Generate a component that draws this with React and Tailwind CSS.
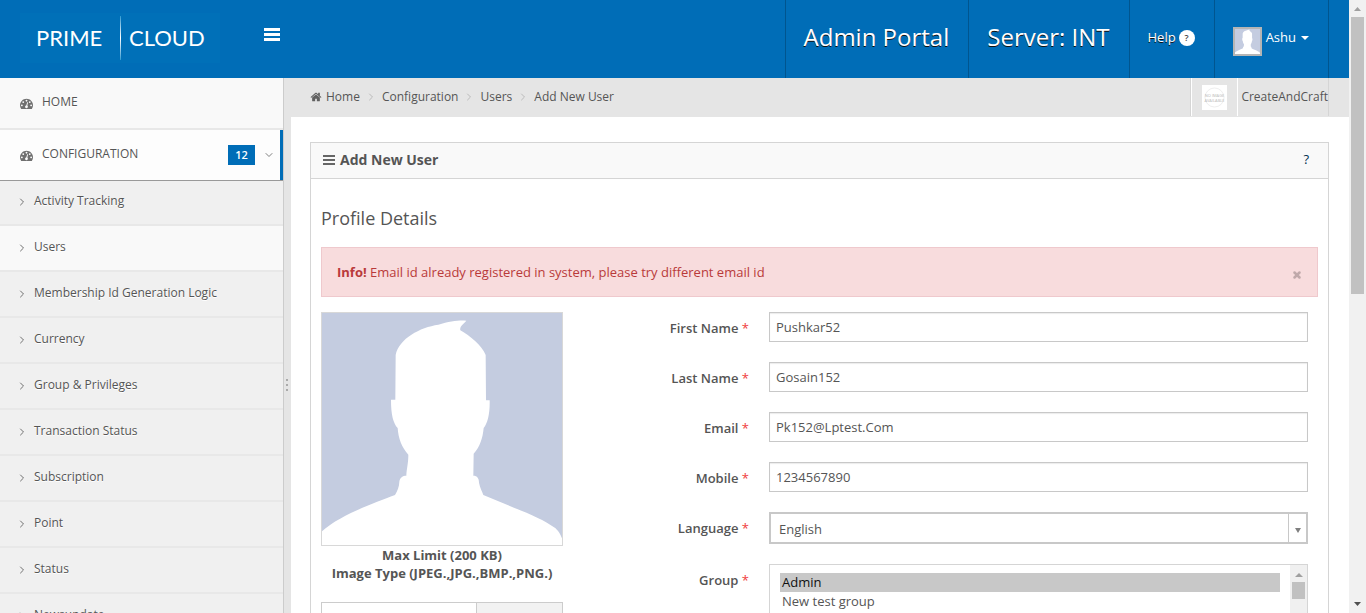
import { ChevronDown, ChevronRight, X } from "lucide-react";

const NAV = [
  "Activity Tracking",
  "Users",
  "Membership Id Generation Logic",
  "Currency",
  "Group & Privileges",
  "Transaction Status",
  "Subscription",
  "Point",
  "Status",
  "Newsupdate",
];

const FIELDS = [
  { id: "first-name", label: "First Name", value: "Pushkar52" },
  { id: "last-name", label: "Last Name", value: "Gosain152" },
  { id: "email", label: "Email", value: "Pk152@Lptest.Com" },
  { id: "mobile", label: "Mobile", value: "1234567890" },
];

function GaugeIcon() {
  return (
    <svg viewBox="0 0 1792 1792" className="size-[13px] shrink-0 fill-[#707070]" aria-hidden="true">
      <path d="M384 1152q0-53-37.5-90.5t-90.5-37.5-90.5 37.5-37.5 90.5 37.5 90.5 90.5 37.5 90.5-37.5 37.5-90.5zm192-448q0-53-37.5-90.5t-90.5-37.5-90.5 37.5-37.5 90.5 37.5 90.5 90.5 37.5 90.5-37.5 37.5-90.5zm428 481l101-382q6-26-7.5-48.5t-38.5-29.5-48 6.5-30 39.5l-101 382q-60 5-107 43.5t-63 98.5q-20 77 20 146t117 89 146-20 89-117q16-60-6-117t-72-91zm660-33q0-53-37.5-90.5t-90.5-37.5-90.5 37.5-37.5 90.5 37.5 90.5 90.5 37.5 90.5-37.5 37.5-90.5zm-640-640q0-53-37.5-90.5t-90.5-37.5-90.5 37.5-37.5 90.5 37.5 90.5 90.5 37.5 90.5-37.5 37.5-90.5zm448 192q0-53-37.5-90.5t-90.5-37.5-90.5 37.5-37.5 90.5 37.5 90.5 90.5 37.5 90.5-37.5 37.5-90.5zm320 448q0 261-141 483-19 29-54 29h-1402q-35 0-54-29-141-221-141-483 0-182 71-348t191-286 286-191 348-71 348 71 286 191 191 286 71 348z" />
    </svg>
  );
}

function HomeIcon() {
  return (
    <svg viewBox="0 0 1792 1792" className="size-3 shrink-0 fill-[#606060]" aria-hidden="true">
      <path d="M1472 992v480q0 26-19 45t-45 19h-384v-384h-256v384h-384q-26 0-45-19t-19-45v-480q0-1 .5-3t.5-3l575-474 575 474q1 2 1 6zm223-69l-62 74q-8 9-21 11h-3q-13 0-21-7l-692-577-692 577q-12 8-24 7-13-2-21-11l-62-74q-8-10-7-23.5t11-21.5l719-599q32-26 76-26t76 26l244 204v-195q0-14 9-23t23-9h192q14 0 23 9t9 23v408l219 182q10 8 11 21.5t-7 23.5z" />
    </svg>
  );
}

function Portrait({ className }) {
  return (
    <svg viewBox="36 39 720 696" preserveAspectRatio="none" className={className} role="img" aria-label="Profile picture">
      <path fill="#c4cce0" d="M36 39H756V735H36z" />
      <path
        fill="#fff"
        d="M36 694C90 645 190 610 255 585C262 572 268 560 268 545C270 532 278 527 289 527C290 505 295 490 295 464C275 442 265 415 263 384C250 370 243 345 243 299L256 299L257 165C268 115 330 82 385 74C420 63 450 60 469 62C462 72 448 78 451 91C480 108 515 135 527 165L528 301L539 301C540 340 533 370 521 384C518 415 510 440 491 461L490 527C502 527 507 535 507 548C510 565 517 575 520 585C600 620 690 650 732 682C745 690 752 705 756 715V735H36z"
      />
    </svg>
  );
}

function Triangle({ className }) {
  return (
    <svg viewBox="0 0 8 4" preserveAspectRatio="none" className={className} aria-hidden="true">
      <path d="M0 0h8l-4 4z" />
    </svg>
  );
}

function Header() {
  const cell = "flex items-center border-l border-[#00558f] pr-[19px] pl-[18px]";
  return (
    <header className="flex h-[78px] shrink-0 bg-[#006db7] pr-5 text-[13px] text-white">
      <a href="#" className="my-[13px] ml-5 flex h-[50px] w-[200px] items-center bg-[#0070b8] pl-4 font-['Lato',sans-serif] text-[22px]">
        <span className="w-[84px] pb-[2px]">PRIME</span>
        <span className="h-11 w-px bg-linear-to-b from-[#2a9bd0] via-white to-[#2a9bd0]" />
        <span className="pb-[2px] pl-2">CLOUD</span>
      </a>
      <button type="button" aria-label="Toggle menu" className="mt-7 ml-11 flex h-[13px] w-4 flex-col justify-between">
        <span className="h-[3px] w-full bg-white" />
        <span className="h-[3px] w-full bg-white" />
        <span className="h-[3px] w-full bg-white" />
      </button>
      <div className="ml-auto flex border-r border-[#00558f] [text-shadow:0_1px_0_#111]">
        <div className={cell}>
          <span className="pb-1 text-2xl">Admin Portal</span>
        </div>
        <div className={cell}>
          <span className="pb-1 text-2xl">Server: INT</span>
        </div>
        <a href="#" className={cell}>
          <span className="flex items-center gap-[3px] pb-[2px]">
            Help
            <span className="flex size-4 items-center justify-center rounded-full bg-white text-[9px] font-semibold text-[#444] [text-shadow:none]">?</span>
          </span>
        </a>
        <button type="button" className={cell}>
          <span className="mt-1 border-2 border-[#b5b5b5]">
            <Portrait className="h-[25px] w-[25px]" />
          </span>
          <span className="pb-[2px] pl-1">Ashu</span>
          <Triangle className="mb-[2px] ml-[5px] h-1 w-2 fill-white" />
        </button>
      </div>
    </header>
  );
}

function Sidebar() {
  return (
    <nav className="w-[284px] shrink-0 overflow-hidden border-r border-[#ccc] bg-[#f0f0f0] text-xs text-[#555] [text-shadow:0_1px_0_#fff]">
      <a href="#" className="flex h-[52px] items-center gap-[9px] border-b-2 border-[#e8e8e8] bg-[#f9f9f9] pl-5">
        <GaugeIcon />
        <span className="pb-[2px] font-medium">HOME</span>
      </a>
      <a href="#" className="flex h-[50px] items-center gap-[9px] border-r-3 border-[#006db7] bg-[#fdfdfd] pl-5">
        <GaugeIcon />
        <span className="pb-[2px] font-medium">CONFIGURATION</span>
        <span className="ml-auto w-[27px] bg-[#006db7] text-center text-[11px] leading-5 font-semibold text-white [text-shadow:none]">12</span>
        <ChevronDown className="mr-[5px] -ml-[1px] size-3 text-[#808080]" />
      </a>
      <ul className="border-t border-[#999]">
        {NAV.map((name) => (
          <li key={name} className="first:-mt-px">
            <a
              href="#"
              className={
                "flex h-[46px] items-center gap-[6px] border-b-2 border-[#e8e8e8] pl-4 " +
                (name === "Users" ? "bg-[#f9f9f9]" : "")
              }
            >
              <ChevronRight className="size-3 text-[#707070]" />
              <span className="pb-[2px]">{name}</span>
            </a>
          </li>
        ))}
      </ul>
    </nav>
  );
}

function Breadcrumb() {
  const sep = <ChevronRight className="mx-[5px] size-3 text-[#bbb]" />;
  return (
    <div className="flex h-[39px] shrink-0 bg-[#e5e5e5] pr-5 text-xs">
      <nav aria-label="Breadcrumb" className="flex items-center pb-px pl-[19px]">
        <HomeIcon />
        <a href="#" className="pl-1">Home</a>
        {sep}
        <a href="#">Configuration</a>
        {sep}
        <a href="#">Users</a>
        {sep}
        <span>Add New User</span>
      </nav>
      <div className="mb-px ml-auto flex border-x border-[#d5d5d5]">
        <span className="flex items-center border-x border-white px-[10px]">
          <svg viewBox="0 0 25 25" className="size-[25px] bg-white" role="img" aria-label="Store logo">
            <circle cx="12.5" cy="12.5" r="9.5" fill="none" stroke="#eee" />
            <g fill="#b8b8b8" fontFamily="Open Sans, sans-serif" fontSize="4" textAnchor="middle">
              <text x="12.5" y="12">NO IMAGE</text>
              <text x="12.5" y="17">AVAILABLE</text>
            </g>
          </svg>
        </span>
        <span className="flex items-center pl-[3px]">CreateAndCraft</span>
      </div>
    </div>
  );
}

function Label({ htmlFor, children }) {
  return (
    <label htmlFor={htmlFor} className="w-[186px] shrink-0 pt-[7px] text-right leading-[18px] font-semibold">
      {children} <span className="font-normal text-[#f03c3c]">*</span>
    </label>
  );
}

function ProfileForm() {
  return (
    <form className="flex pt-[15px]">
      <div className="w-[242px] shrink-0 text-center leading-[18px] font-bold">
        <div className="border border-[#d8d8d8]">
          <Portrait className="h-[232px] w-full" />
        </div>
        <p>Max Limit (200 KB)</p>
        <p>Image Type (JPEG.,JPG.,BMP.,PNG.)</p>
        <div className="mt-5 flex h-8 border border-[#ccc] font-normal">
          <input type="text" aria-label="Image file" className="min-w-0 flex-1 bg-white px-2 outline-none" />
          <button type="button" aria-label="Browse" className="w-[86px] border-l border-[#ccc] bg-[#f2f2f2]" />
        </div>
      </div>
      <div className="flex flex-1 flex-col gap-5 pr-[10px]">
        {FIELDS.map((f) => (
          <div key={f.id} className="flex gap-5">
            <Label htmlFor={f.id}>{f.label}</Label>
            <input
              id={f.id}
              type="text"
              defaultValue={f.value}
              className="h-[30px] min-w-0 flex-1 border border-[#c8c8c8] bg-white px-[6px] shadow-[inset_0_1px_1px_rgba(0,0,0,0.08)] outline-none"
            />
          </div>
        ))}
        <div className="flex gap-5">
          <Label htmlFor="language">Language</Label>
          <div className="flex h-8 flex-1 border-2 border-[#c8c8c8]">
            <select id="language" className="flex-1 appearance-none bg-white pt-[3px] pl-2 outline-none" defaultValue="English">
              <option>English</option>
            </select>
            <span className="pointer-events-none flex w-[18px] items-center justify-center border-l border-[#c8c8c8] pt-1">
              <Triangle className="h-[5px] w-[6px] fill-[#808080]" />
            </span>
          </div>
        </div>
        <div className="flex gap-5">
          <Label htmlFor="group">Group</Label>
          <div className="flex h-[110px] flex-1 border border-[#d5d5d5]">
            <select
              id="group"
              multiple
              defaultValue={["Admin"]}
              className="mx-[10px] my-2 min-w-0 flex-1 overflow-hidden bg-white outline-none"
            >
              <option className="h-[19px] px-[2px] checked:bg-[#c8c8c8]">Admin</option>
              <option className="h-[19px] px-[2px]">New test group</option>
            </select>
            <div className="flex w-[17px] flex-col items-center bg-[#f0f0f0] pt-2" aria-hidden="true">
              <Triangle className="h-1 w-2 rotate-180 fill-[#a0a0a0]" />
              <span className="mt-[5px] h-[17px] w-[13px] bg-[#c1c1c1]" />
            </div>
          </div>
        </div>
      </div>
    </form>
  );
}

export default function App() {
  return (
    <div className="flex h-screen overflow-hidden bg-white font-['Open_Sans',sans-serif] text-[13px] text-[#555]">
      <div className="flex min-w-0 flex-1 flex-col">
        <Header />
        <div className="flex min-h-0 flex-1">
          <Sidebar />
          <div className="flex w-[7px] shrink-0 flex-col justify-center gap-[3px] bg-[#e5e5e5] pt-[78px] pl-[2px]">
            <span className="size-[2px] bg-[#aaa]" />
            <span className="size-[2px] bg-[#aaa]" />
            <span className="size-[2px] bg-[#aaa]" />
          </div>
          <div className="flex min-w-0 flex-1 flex-col overflow-hidden">
            <Breadcrumb />
            <main className="flex-1 pt-[25px] pr-5 pl-[19px]">
              <section className="border border-[#d5d5d5]">
                <div className="flex h-9 items-center border-b border-[#d5d5d5] bg-[#f9f9f9] pr-[19px] pb-px pl-3">
                  <span className="mr-[5px] flex h-[10px] w-3 flex-col justify-between" aria-hidden="true">
                    <span className="h-[2px] bg-[#666]" />
                    <span className="h-[2px] bg-[#666]" />
                    <span className="h-[2px] bg-[#666]" />
                  </span>
                  <h1 className="text-sm font-bold">Add New User</h1>
                  <a href="#" className="ml-auto text-[#003050]">?</a>
                </div>
                <div className="px-[10px] pt-[25px]">
                  <h2 className="text-lg leading-[28px]">Profile Details</h2>
                  <div role="alert" className="mt-[15px] flex h-[50px] items-center border border-[#efc9cd] bg-[#f8dcdd] pr-[15px] pl-[15px] text-[#b93a3a]">
                    <p className="pt-px"><b>Info!</b> Email id already registered in system, please try different email id</p>
                    <button type="button" aria-label="Dismiss" className="mt-[6px] ml-auto">
                      <X className="size-[10px] text-[#c0a9aa]" strokeWidth={6} />
                    </button>
                  </div>
                  <ProfileForm />
                </div>
              </section>
            </main>
          </div>
        </div>
      </div>
      <div className="flex w-[17px] shrink-0 flex-col items-center bg-[#f1f1f1] py-[7px]" aria-hidden="true">
        <Triangle className="h-1 w-[7px] shrink-0 rotate-180 fill-[#a0a0a0]" />
        <span className="mt-[6px] h-[277px] w-[13px] bg-[#c1c1c1]" />
        <Triangle className="mt-auto h-1 w-[7px] shrink-0 fill-[#505050]" />
      </div>
    </div>
  );
}
